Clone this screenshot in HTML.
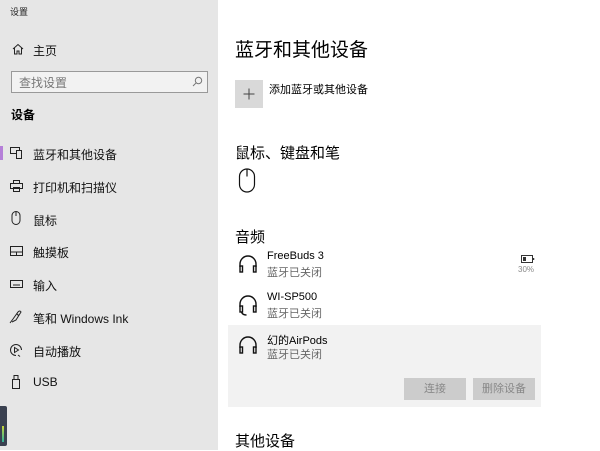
<!DOCTYPE html>
<html><head><meta charset="utf-8"><style>
*{margin:0;padding:0;box-sizing:border-box}
body{width:600px;height:450px;overflow:hidden;background:#fff;font-family:"Liberation Sans","Noto Sans CJK SC",sans-serif;color:#000;position:relative}
.a{position:absolute;white-space:nowrap}
#side{position:absolute;left:0;top:0;width:218px;height:450px;background:#e6e6e6}
.nv{font-size:12px;color:#111}
.ic{position:absolute}
.sub{font-size:11px;color:#666}
</style></head><body>
<div id="side">
<div class="a" style="left:10px;top:5px;font-size:9px;color:#222">设置</div>
<svg class="ic" style="left:12px;top:43px" width="12" height="12" viewBox="0 0 12 12" fill="none" stroke="#222" stroke-width="1"><path d="M1 6L6 1.5L11 6M2.5 5v6h2.5V8h2v3h2.5V5"/></svg>
<div class="a nv" style="left:33px;top:42px">主页</div>
<div class="a" style="left:11px;top:71px;width:197px;height:22px;border:1px solid #999;background:#f2f2f2"></div>
<div class="a" style="left:19px;top:74px;font-size:12px;color:#777">查找设置</div>
<svg class="ic" style="left:192px;top:76px" width="11" height="11" viewBox="0 0 11 11" fill="none" stroke="#777"><circle cx="6.5" cy="4.5" r="3.2"/><path d="M4.2 6.8L1 10"/></svg>
<div class="a" style="left:11px;top:106px;font-size:12px;font-weight:bold">设备</div>
<div class="a" style="left:0;top:146px;width:3px;height:14px;background:#b57fd8"></div>
<svg class="ic" style="left:10px;top:147px" width="13" height="12" viewBox="0 0 13 12" fill="none" stroke="#222"><rect x="0.5" y="0.5" width="9" height="6"/><rect x="6.5" y="3.5" width="5" height="8" fill="#e6e6e6"/></svg>
<div class="a nv" style="left:33px;top:146px">蓝牙和其他设备</div>
<svg class="ic" style="left:10px;top:180px" width="13" height="12" viewBox="0 0 13 12" fill="none" stroke="#222"><rect x="3.5" y="0.5" width="6" height="3"/><rect x="0.5" y="3.5" width="12" height="5"/><rect x="3.5" y="7.5" width="6" height="4"/></svg>
<div class="a nv" style="left:33px;top:179px">打印机和扫描仪</div>
<svg class="ic" style="left:11px;top:211px" width="10" height="14" viewBox="0 0 10 14" fill="none" stroke="#222"><rect x="1" y="0.5" width="8" height="13" rx="4"/><path d="M5 1v4"/></svg>
<div class="a nv" style="left:33px;top:212px">鼠标</div>
<svg class="ic" style="left:10px;top:246px" width="13" height="10" viewBox="0 0 13 10" fill="none" stroke="#222"><rect x="0.5" y="0.5" width="12" height="9"/><path d="M0.5 6h12M6.5 6v3.5"/></svg>
<div class="a nv" style="left:33px;top:244px">触摸板</div>
<svg class="ic" style="left:10px;top:280px" width="13" height="8" viewBox="0 0 13 8" fill="none" stroke="#222"><rect x="0.5" y="0.5" width="12" height="7"/><path d="M3 5h7" /></svg>
<div class="a nv" style="left:33px;top:277px">输入</div>
<svg class="ic" style="left:9px;top:310px" width="14" height="14" viewBox="0 0 14 14" fill="none" stroke="#222"><path d="M1 13L4 9L9 2Q11 0 12 2L7 10L3 12M8 4Q10 5 9 7"/></svg>
<div class="a nv" style="left:33px;top:310px">笔和 Windows Ink</div>
<svg class="ic" style="left:9px;top:343px" width="14" height="14" viewBox="0 0 14 14" fill="none" stroke="#222"><path d="M7 12.5A5.5 5.5 0 1 1 12.5 7"/><path d="M5.5 4.5v5l4-2.5z"/><path d="M9 12l2 1.5"/></svg>
<div class="a nv" style="left:33px;top:343px">自动播放</div>
<svg class="ic" style="left:12px;top:375px" width="8" height="14" viewBox="0 0 8 14" fill="none" stroke="#222"><rect x="0.5" y="4.5" width="7" height="9"/><rect x="2" y="0.5" width="4" height="4"/></svg>
<div class="a nv" style="left:33px;top:375px">USB</div>
<div class="a" style="left:0;top:406px;width:7px;height:40px;background:#3a4150;border-radius:0 2px 2px 0"></div>
<div class="a" style="left:2px;top:426px;width:2px;height:16px;background:linear-gradient(#c8d43a,#2fb39a)"></div>
</div>

<div class="a" style="left:235px;top:35px;font-size:19px;color:#000">蓝牙和其他设备</div>
<div class="a" style="left:235px;top:80px;width:28px;height:28px;background:#d9d9d9"></div>
<svg class="ic" style="left:235px;top:80px" width="28" height="28" viewBox="0 0 28 28" stroke="#444" stroke-width="1"><path d="M14 8.5v11M8.5 14h11"/></svg>
<div class="a" style="left:269px;top:81px;font-size:11px">添加蓝牙或其他设备</div>
<div class="a" style="left:235px;top:142px;font-size:15px">鼠标、键盘和笔</div>
<svg class="ic" style="left:238px;top:168px" width="18" height="25" viewBox="0 0 18 25" fill="none" stroke="#111" stroke-width="1.2"><rect x="1.5" y="1" width="15" height="23" rx="7.5"/><path d="M9 1.5v7"/></svg>
<div class="a" style="left:235px;top:226px;font-size:15px">音频</div>

<svg class="ic" style="left:238px;top:254px" width="20" height="20" viewBox="0 0 20 20" fill="none" stroke="#111" stroke-width="1.4"><path d="M2 13V10a8 8 0 0 1 16 0v3"/><rect x="2" y="12" width="2.5" height="6"/><rect x="15.5" y="12" width="2.5" height="6"/></svg>
<div class="a" style="left:267px;top:250px;font-size:11px">FreeBuds 3</div>
<div class="a sub" style="left:267px;top:264px">蓝牙已关闭</div>
<svg class="ic" style="left:521px;top:255px" width="14" height="8" viewBox="0 0 14 8" fill="none" stroke="#333"><rect x="0.5" y="0.5" width="11" height="7"/><rect x="2" y="2" width="3" height="4" fill="#333" stroke="none"/><path d="M12.5 3v2" stroke-width="1.5"/></svg>
<div class="a" style="left:518px;top:265px;font-size:8px;color:#888">30%</div>

<svg class="ic" style="left:238px;top:294px" width="20" height="22" viewBox="0 0 20 22" fill="none" stroke="#111" stroke-width="1.4"><path d="M2 13V10a8 8 0 0 1 16 0v3"/><rect x="2" y="12" width="2.5" height="6"/><rect x="15.5" y="12" width="2.5" height="6"/><path d="M3.5 18q1 3 5 3"/></svg>
<div class="a" style="left:267px;top:291px;font-size:11px">WI-SP500</div>
<div class="a sub" style="left:267px;top:305px">蓝牙已关闭</div>

<div class="a" style="left:228px;top:325px;width:313px;height:82px;background:#f2f2f2"></div>
<svg class="ic" style="left:238px;top:335px" width="20" height="20" viewBox="0 0 20 20" fill="none" stroke="#111" stroke-width="1.4"><path d="M2 13V10a8 8 0 0 1 16 0v3"/><rect x="2" y="12" width="2.5" height="6"/><rect x="15.5" y="12" width="2.5" height="6"/></svg>
<div class="a" style="left:267px;top:332px;font-size:11px">幻的AirPods</div>
<div class="a sub" style="left:267px;top:346px">蓝牙已关闭</div>
<div class="a" style="left:404px;top:378px;width:62px;height:22px;background:#cccccc;color:#888;font-size:11px;text-align:center;line-height:22px">连接</div>
<div class="a" style="left:473px;top:378px;width:62px;height:22px;background:#cccccc;color:#888;font-size:11px;text-align:center;line-height:22px">删除设备</div>

<div class="a" style="left:235px;top:430px;font-size:15px">其他设备</div>
</body></html>
